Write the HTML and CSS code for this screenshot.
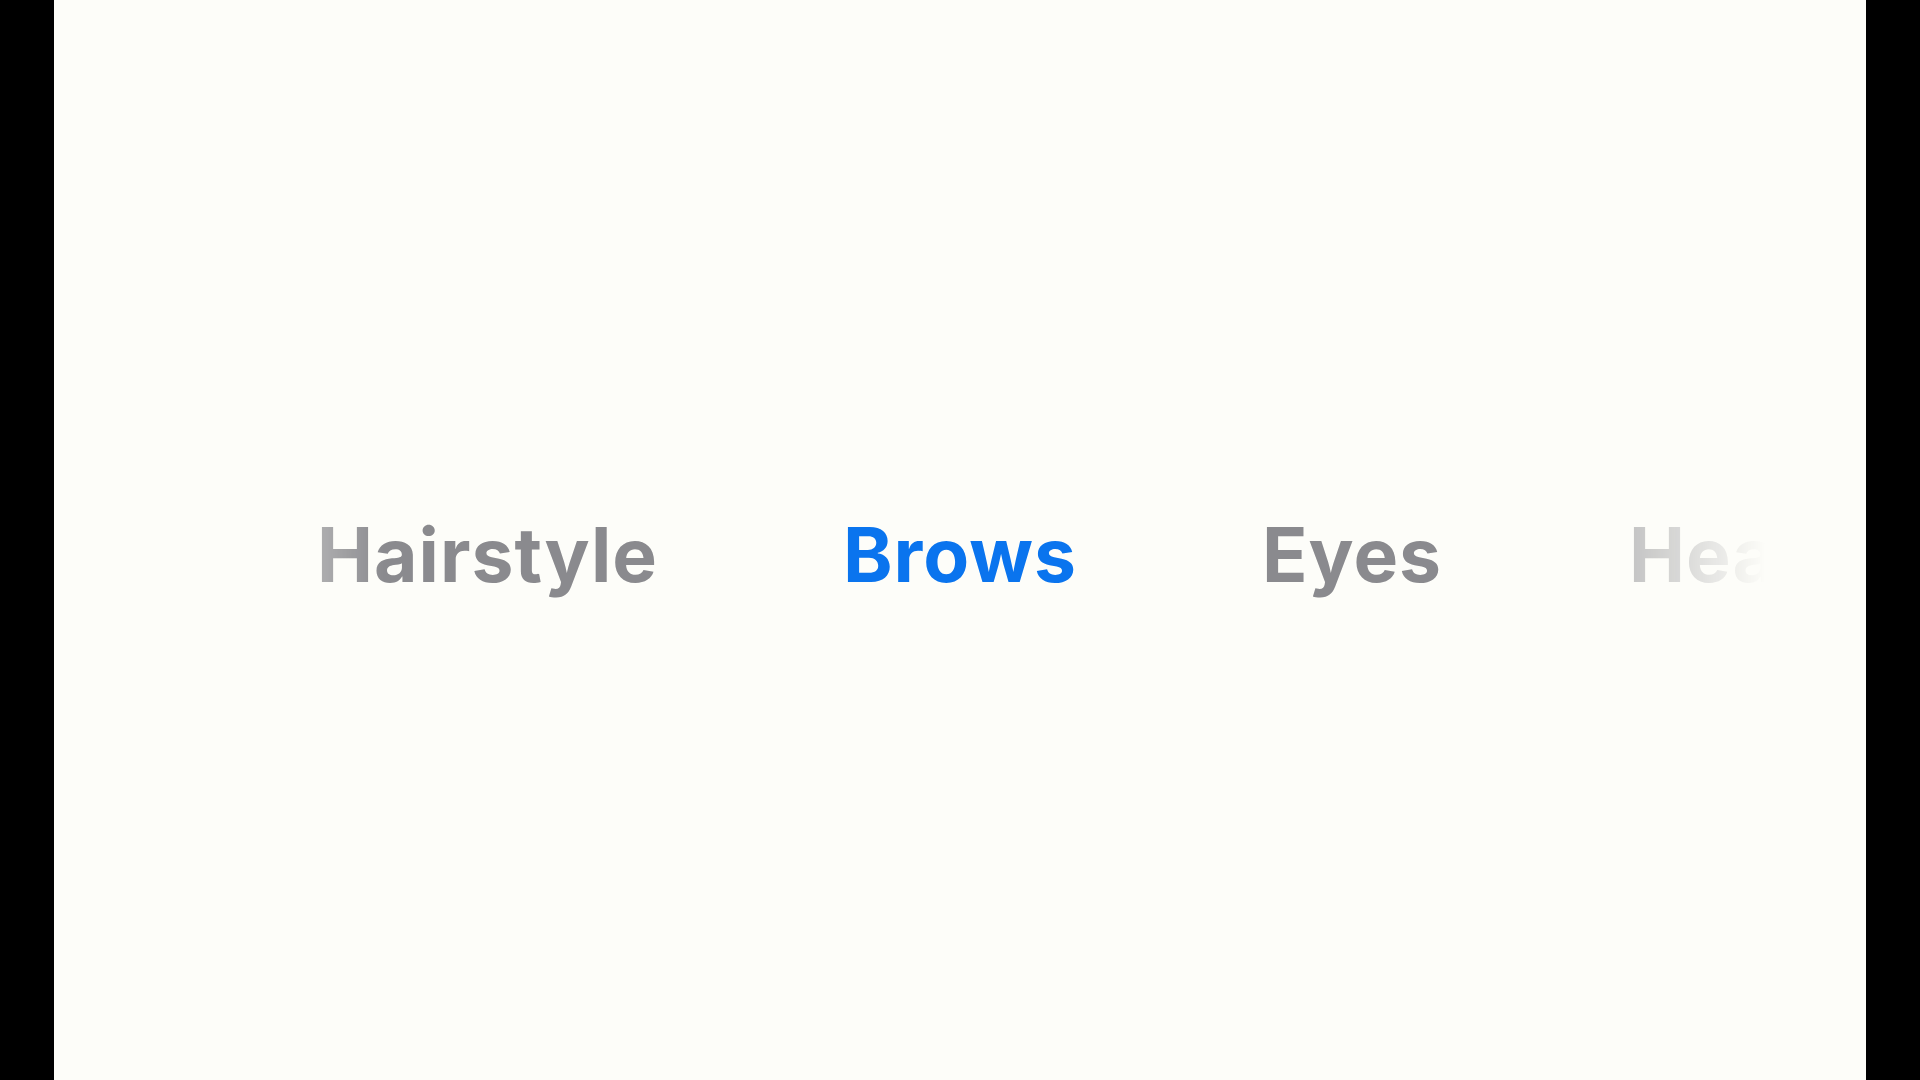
FILE: index.html
```html
<!DOCTYPE html>
<html lang="en">
<head>
<meta charset="utf-8">
<title>Picker</title>
<link rel="stylesheet" href="styles.css">
</head>
<body>
<main class="stage">
  <div class="picker">
    <div class="side side-left">
      <span class="item">Hairstyle</span>
    </div>
    <span class="item item-active">Brows</span>
    <div class="side side-right">
      <span class="item">Eyes</span>
      <span class="item">Head</span>
    </div>
  </div>
</main>
</body>
</html>
```
FILE: styles.css
```css
html, body {
  margin: 0;
  padding: 0;
  height: 100%;
}
body {
  background: #000;
  display: flex;
  justify-content: center;
}
.stage {
  width: 1812px;
  height: 1080px;
  background: #fdfdf9;
  font-family: Inter, "Noto Sans", sans-serif;
  display: flex;
  flex-direction: column;
  padding-top: 510px;
  box-sizing: border-box;
}
.picker {
  display: grid;
  grid-template-columns: 1fr auto 1fr;
  column-gap: 185px;
  align-items: baseline;
  -webkit-mask-image: linear-gradient(to right, transparent 120px, #000 330px, #000 1440px, transparent 1712px);
  mask-image: linear-gradient(to right, transparent 120px, #000 330px, #000 1440px, transparent 1712px);
}
.side {
  display: flex;
  gap: 187px;
  overflow: hidden;
  white-space: nowrap;
}
.side-left {
  justify-content: flex-end;
}
.item {
  font-size: 75px;
  font-weight: 700;
  line-height: 90px;
  letter-spacing: 1px;
  color: #8a8a8e;
  white-space: nowrap;
}
.item-active {
  color: #0a74ee;
}
```
